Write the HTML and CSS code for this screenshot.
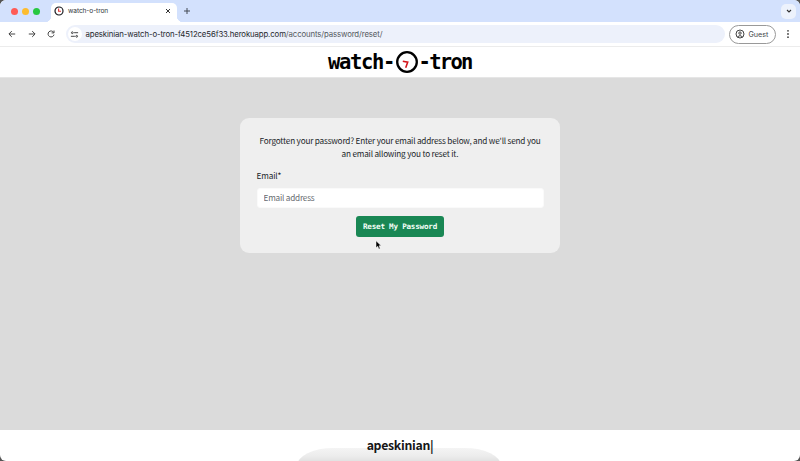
FILE: index.html
```
<!DOCTYPE html>
<html lang="en">
<head>
<meta charset="utf-8">
<title>watch-o-tron</title>
<link rel="stylesheet" href="styles.css">
</head>
<body>
<div class="window">
  <div class="tabs">
    <div class="lights"><i class="red"></i><i class="yellow"></i><i class="green"></i></div>
    <div class="tab">
      <svg class="favicon" viewBox="0 0 10 10"><circle cx="5" cy="5" r="4" fill="#fff" stroke="#171a20" stroke-width="1.2"/><path d="M4.6 2.5v2.7H7" fill="none" stroke="#d33" stroke-width="1.1"/></svg>
      <span class="tab-title">watch-o-tron</span>
      <svg class="close" viewBox="0 0 6 6"><path d="m1 1 4 4m0-4L1 5" stroke="#333" stroke-width="1"/></svg>
    </div>
    <svg class="plus" viewBox="0 0 8 8"><path d="M4 1v6M1 4h6" stroke="#444a55" stroke-width="1"/></svg>
    <div class="tab-search"><svg viewBox="0 0 6 6"><path d="m1 2 2 2 2-2" fill="none" stroke="#333" stroke-width="1.1"/></svg></div>
  </div>
  <div class="toolbar">
    <svg class="nav" viewBox="0 0 10 10"><path d="M8.2 5H2M4.8 2.1 1.9 5l2.9 2.9" fill="none" stroke="#444" stroke-width="1"/></svg>
    <svg class="nav" viewBox="0 0 10 10"><path d="M1.8 5H8M5.2 2.1 8.1 5 5.2 7.9" fill="none" stroke="#444" stroke-width="1"/></svg>
    <svg class="nav" viewBox="0 0 10 10"><path d="M7.7 3.5A3 3 0 1 0 8 5.6M8 1.5v2.4H5.6" fill="none" stroke="#444" stroke-width="1"/></svg>
    <div class="address">
      <div class="site"><svg viewBox="0 0 10 10"><g fill="none" stroke="#444" stroke-width="1.1"><circle cx="2.6" cy="3" r="1"/><path d="M4.6 3H9M1 7h4.4"/><circle cx="7.4" cy="7" r="1"/></g></svg></div>
      <span class="url">apeskinian-watch-o-tron-f4512ce56f33.herokuapp.com<span class="path">/accounts/password/reset/</span></span>
    </div>
    <div class="guest">
      <svg viewBox="0 0 10 10"><g fill="none" stroke="#444" stroke-width="1"><circle cx="5" cy="5" r="4"/><circle cx="5" cy="4.1" r="1.2"/><path d="M2.5 7.8Q5 5.3 7.5 7.8"/></g></svg>
      <span>Guest</span>
    </div>
    <svg class="menu" viewBox="0 0 4 10"><g fill="#444"><circle cx="2" cy="1.8" r=".9"/><circle cx="2" cy="5" r=".9"/><circle cx="2" cy="8.2" r=".9"/></g></svg>
  </div>
  <header class="brand">
    <span class="logo-text">watch-</span>
    <svg width="24" height="24" viewBox="0 0 24 24"><circle cx="12" cy="12" r="9.8" fill="#fff" stroke="#000" stroke-width="2.3"/><path d="m7.8 11.2 4.9 1-2 5.6" fill="none" stroke="#d4151b" stroke-width="1.6"/></svg>
    <span class="logo-text">-tron</span>
  </header>
  <main>
    <form class="card" onsubmit="return false">
      <p>Forgotten your password? Enter your email address below, and we'll send you<br>an email allowing you to reset it.</p>
      <label for="email">Email*</label>
      <input id="email" type="email" placeholder="Email address">
      <button type="submit">Reset My Password</button>
    </form>
  </main>
  <footer>apeskinian|</footer>
</div>
<svg class="cursor" viewBox="0 0 7 10"><path d="M1 .8v7l1.7-1.5 1.2 2.8 1.3-.6L4 5.8h2.2z" fill="#000" stroke="#fff" stroke-width=".5"/></svg>
</body>
</html>
```
FILE: styles.css
```
* { box-sizing: border-box; }
body { margin: 0; background: #555; font-family: "Noto Sans CJK JP", "Noto Sans", sans-serif; color: #212529; overflow: hidden; }
svg { display: block; flex: none; }
.window { width: 800px; height: 461px; display: flex; flex-direction: column; border-radius: 6px; overflow: hidden; background: #fff; }
.tabs { height: 22px; flex: none; display: flex; align-items: center; background: #d3e1fd; padding-right: 4px; }
.lights { display: flex; gap: 4px; margin-left: 11px; width: 40px; }
.lights i { width: 7px; height: 7px; border-radius: 50%; }
.red { background: #ff5b56; }
.yellow { background: #fdbc2f; }
.green { background: #28c840; }
.tab { position: relative; display: flex; align-items: center; align-self: flex-end; width: 126px; height: 19px; background: #fff; border-radius: 5px 5px 0 0; padding: 0 6px 3px 3px; }
.tab::before, .tab::after { content: ""; position: absolute; bottom: 0; width: 5px; height: 5px; }
.tab::before { left: -5px; background: radial-gradient(circle at 0 0, transparent 4.7px, #fff 5px); }
.tab::after { right: -5px; background: radial-gradient(circle at 100% 0, transparent 4.7px, #fff 5px); }
.favicon { width: 10px; height: 10px; }
.tab-title { font: 6.6px Inter, sans-serif; letter-spacing: -.1px; margin-left: 4px; color: #33373d; }
.close { width: 6px; height: 6px; margin-left: auto; }
.plus { width: 8px; height: 8px; margin-left: 6px; }
.tab-search { width: 15px; height: 15px; border-radius: 5px; background: #edf2fc; display: grid; place-items: center; margin-left: auto; }
.tab-search svg { width: 6px; height: 6px; }
.toolbar { height: 25px; flex: none; display: flex; align-items: center; border-bottom: 1px solid #ececec; padding: 0 10px 0 7px; }
.nav { width: 10px; height: 10px; margin-right: 9.5px; }
.address { display: flex; align-items: center; width: 659px; height: 18px; background: #edf1fb; border-radius: 9px; padding-left: 2px; }
.site { width: 14px; height: 14px; border-radius: 50%; background: #fff; display: grid; place-items: center; }
.site svg { width: 9px; height: 9px; }
.url { font: 7.8px Inter, sans-serif; letter-spacing: -.12px; margin-left: 4px; color: #25282d; white-space: nowrap; }
.path { color: #555a61; }
.guest { display: flex; align-items: center; gap: 4px; width: 47px; height: 19px; margin-left: 4px; border: 1px solid #999; border-radius: 10px; padding-left: 5px; font: 7.2px Inter, sans-serif; color: #44474b; }
.guest svg { width: 10px; height: 10px; }
.menu { width: 4px; height: 10px; margin-left: auto; }
.brand { height: 31px; flex: none; display: flex; justify-content: center; align-items: center; border-bottom: 1px solid #e6e6e6; color: #000; }
.logo-text { width: 66.5px; font: bold 20.5px/28px "DejaVu Sans Mono", monospace; letter-spacing: -1.35px; white-space: nowrap; }
.logo-text:last-child { width: 53.5px; letter-spacing: -1.7px; }
main { height: 352px; flex: none; background: #dbdbdb; display: flex; justify-content: center; align-items: flex-start; padding-top: 40px; }
.card { width: 320px; height: 135px; border-radius: 9px; background: #efefef; padding: 16px 16.5px; display: flex; flex-direction: column; }
.card p { margin: 0; font-size: 8.2px; letter-spacing: -.19px; line-height: 13px; text-align: center; white-space: nowrap; }
.card label { font-size: 8.2px; letter-spacing: -.12px; line-height: 13px; margin-top: 8.5px; }
.card input { font: 8.2px "Noto Sans CJK JP", "Noto Sans", sans-serif; letter-spacing: -.19px; height: 20px; flex: none; margin-top: 6px; border: 1px solid #fafafa; border-radius: 3px; padding: 0 6px 1px; background: #fff; }
.card input::placeholder { color: #666b70; opacity: 1; }
.card button { align-self: center; width: 88px; height: 21px; flex: none; margin-top: 8.5px; padding: 0; border: 0; border-radius: 3px; background: #198754; font: bold 7.6px/21px "DejaVu Sans Mono", monospace; letter-spacing: -.22px; color: #f4fff8; white-space: nowrap; }
footer { position: relative; flex: 1; overflow: hidden; font-weight: 700; font-size: 12.3px; letter-spacing: -.3px; line-height: 30px; text-align: center; color: #171717; isolation: isolate; }
footer::before { content: ""; position: absolute; z-index: -1; left: 297px; top: 18px; width: 204px; height: 40px; border-radius: 36px 36px 0 0 / 18px 18px 0 0; background: linear-gradient(#f4f4f4, #ececec 8px, #e2e2e2 13px); }
.cursor { position: absolute; left: 375px; top: 240px; width: 7px; height: 10px; }
```
